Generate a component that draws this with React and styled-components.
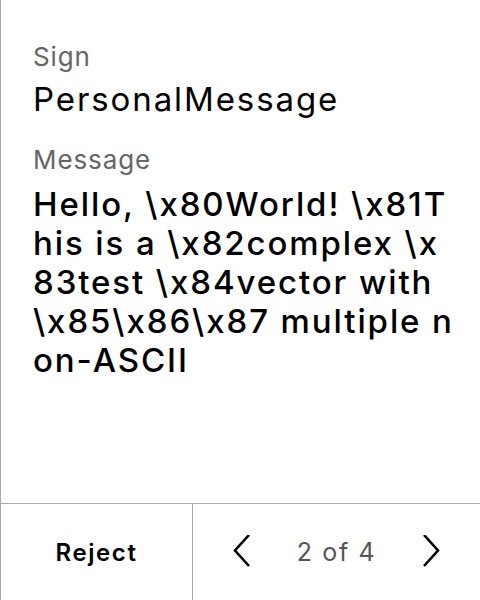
import React from 'react'
import styled, { createGlobalStyle } from "styled-components";

const Global = createGlobalStyle`
  body {
    margin: 0;
    background: #fff;
    font-family: Inter, "Noto Sans", sans-serif;
  }
`;

const Screen = styled.div`
  width: 480px;
  height: 600px;
  box-sizing: border-box;
  border-left: 1px solid #aaa;
  display: flex;
  flex-direction: column;
  color: #000;
`;

const Body = styled.div`
  flex: 1;
  padding: 40px 26px 0 32px;
  display: flex;
  flex-direction: column;
`;

const Label = styled.div`
  font-size: 26px;
  line-height: 34px;
  letter-spacing: 0.9px;
  color: #666;
`;

const Value = styled.div`
  font-size: 33px;
  line-height: 39px;
  letter-spacing: 1.9px;
  margin-top: ${(p) => p.top || 6}px;
  margin-bottom: ${(p) => p.gap || 0}px;
  word-break: break-all;
  font-weight: ${(p) => (p.bold ? 450 : 400)};
`;

const Footer = styled.div`
  height: 96px;
  border-top: 1px solid #aaa;
  display: flex;
`;

const RejectCell = styled.div`
  width: 191px;
  border-right: 1px solid #aaa;
  display: flex;
  align-items: center;
  justify-content: center;
  font-size: 24px;
  font-weight: 600;
  letter-spacing: 1.6px;
`;

const Pager = styled.div`
  flex: 1;
  display: flex;
  align-items: center;
  justify-content: center;
  gap: 46px;
`;

const Count = styled.span`
  font-size: 25px;
  letter-spacing: 1.6px;
  color: #555;
`;

const Chevron = ({ dir }) => (
  <svg width="18" height="34" viewBox="0 0 18 34">
    <path
      d={dir === "left" ? "M16 0 L2 15.5 L16 31" : "M2 0 L16 15.5 L2 31"}
      fill="none"
      stroke="#000"
      strokeWidth="2.6"
    />
  </svg>
);

const App = () => {
  return (
    <Screen>
      <Global />
      <Body>
        <Label>Sign</Label>
        <Value gap={24}>PersonalMessage</Value>
        <Label>Message</Label>
        <Value bold top={8}>
          {"Hello, \\x80World! \\x81This is a \\x82complex \\x83test \\x84vector with \\x85\\x86\\x87 multiple non-ASCII"}
        </Value>
      </Body>
      <Footer>
        <RejectCell>Reject</RejectCell>
        <Pager>
          <Chevron dir="left" />
          <Count>2 of 4</Count>
          <Chevron dir="right" />
        </Pager>
      </Footer>
    </Screen>
  );
};

export default App
